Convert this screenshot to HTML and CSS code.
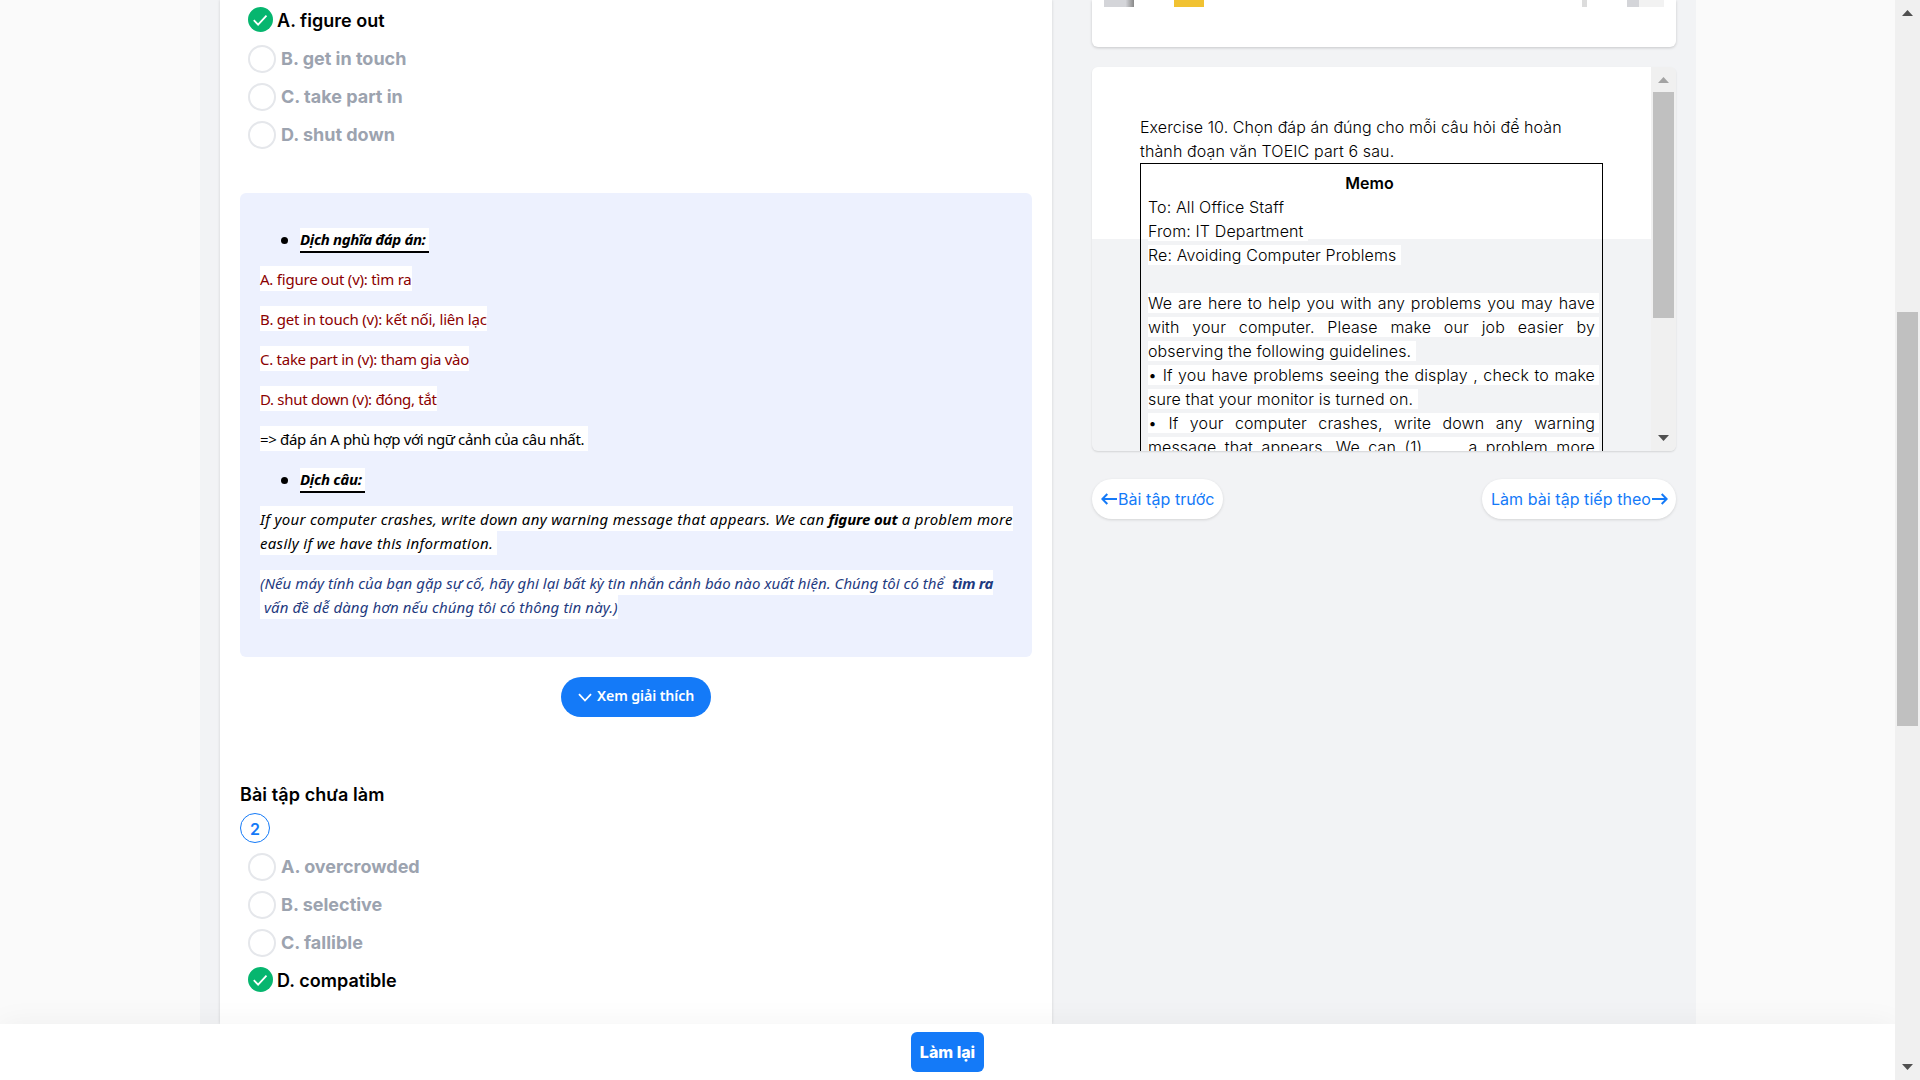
FILE: index.html
```html
<!DOCTYPE html>
<html lang="vi">
<head>
<meta charset="utf-8">
<title>Bài tập TOEIC part 6</title>
<link rel="stylesheet" href="styles.css">
</head>
<body>
<div class="viewport">
  <div class="page">
    <main class="container">
      <section class="questions">
        <ul class="options">
          <li class="option option-correct">
            <svg class="check" viewBox="0 0 25 25"><circle cx="12.5" cy="12.5" r="12.5"/><path d="M5.8 13.2l4.3 4.4 8.4-9"/></svg>
            <span>A. figure out</span>
          </li>
          <li class="option"><i class="radio"></i><span>B. get in touch</span></li>
          <li class="option"><i class="radio"></i><span>C. take part in</span></li>
          <li class="option"><i class="radio"></i><span>D. shut down</span></li>
        </ul>

        <div class="explain">
          <h4 class="topic"><span class="topic-text">Dịch nghĩa đáp án:&nbsp;</span></h4>
          <p class="answer"><span class="mark">A. figure out (v): tìm ra</span></p>
          <p class="answer"><span class="mark">B. get in touch (v): kết nối, liên lạc</span></p>
          <p class="answer answer-third"><span class="mark">C. take part in (v): tham gia vào</span></p>
          <p class="answer answer-last"><span class="mark">D. shut down (v): đóng, tắt</span></p>
          <p class="conclusion"><span class="mark">=&gt; đáp án A phù hợp với ngữ cảnh của câu nhất.&nbsp;</span></p>
          <h4 class="topic topic-short"><span class="topic-text">Dịch câu:&nbsp;</span></h4>
          <p class="english"><span class="mark">If your computer crashes, write down any warning message that appears. We can <b>figure out</b> a problem more<br>easily if we have this information.&nbsp;</span></p>
          <p class="vietnamese"><span class="mark">(Nếu máy tính của bạn gặp sự cố, hãy ghi lại bất kỳ tin nhắn cảnh báo nào xuất hiện. Chúng tôi có thể &nbsp;<b>tìm ra</b><br>&nbsp;<span class="second">vấn đề dễ dàng hơn nếu chúng tôi có thông tin này.)</span></span></p>
        </div>

        <button class="toggle">
          <svg class="chevron" viewBox="0 0 14 9"><path d="M1 1.2l6 6.3 6-6.3"/></svg>
          <span>Xem giải thích</span>
        </button>

        <h3 class="heading">Bài tập chưa làm</h3>
        <div class="number">2</div>
        <ul class="options">
          <li class="option"><i class="radio"></i><span>A. overcrowded</span></li>
          <li class="option"><i class="radio"></i><span>B. selective</span></li>
          <li class="option"><i class="radio"></i><span>C. fallible</span></li>
          <li class="option option-correct">
            <svg class="check" viewBox="0 0 25 25"><circle cx="12.5" cy="12.5" r="12.5"/><path d="M5.8 13.2l4.3 4.4 8.4-9"/></svg>
            <span>D. compatible</span>
          </li>
        </ul>
      </section>

      <aside class="side">
        <div class="banner">
          <i class="chip chip-gray"></i><i class="chip chip-yellow"></i><i class="chip chip-line"></i><i class="chip chip-pale"></i>
        </div>

        <div class="reading">
          <div class="reading-body">
            <div class="passage">
              <div class="line lead">Exercise 10. Chọn đáp án đúng cho mỗi câu hỏi để hoàn</div>
              <div class="line">thành đoạn văn TOEIC part 6 sau.</div>
              <div class="memo">
                <div class="line memo-title">Memo&nbsp;</div>
                <div class="line"><span class="paper">To: All Office Staff&nbsp;</span></div>
                <div class="line"><span class="paper">From: IT Department&nbsp;</span></div>
                <div class="line"><span class="paper">Re: Avoiding Computer Problems&nbsp;</span></div>
                <div class="line"></div>
                <div class="line"><span class="paper full">We are here to help you with any problems you may have</span></div>
                <div class="line"><span class="paper full">with your computer. Please make our job easier by</span></div>
                <div class="line"><span class="paper">observing the following guidelines.&nbsp;</span></div>
                <div class="line"><span class="paper full">• If you have problems seeing the display , check to make</span></div>
                <div class="line"><span class="paper">sure that your monitor is turned on.&nbsp;</span></div>
                <div class="line"><span class="paper full">• If your computer crashes, write down any warning</span></div>
                <div class="line"><span class="paper full">message that appears. We can (1) ____ a problem more</span></div>
              </div>
            </div>
          </div>
          <div class="bar bar-inner">
            <svg class="arrow" viewBox="0 0 11 6"><path fill="#a3a3a3" d="M5.5 0L11 6H0z"/></svg>
            <i class="thumb"></i>
            <svg class="arrow arrow-end" viewBox="0 0 11 6"><path fill="#505050" d="M0 0h11L5.5 6z"/></svg>
          </div>
        </div>

        <nav class="pager">
          <a class="pill"><svg class="go" viewBox="0 0 16 12"><path d="M16 6H1.5M6.3 1L1.3 6l5 5"/></svg><span>Bài tập trước</span></a>
          <a class="pill"><span>Làm bài tập tiếp theo</span><svg class="go" viewBox="0 0 16 12"><path d="M0 6h14.5M9.7 1l5 5-5 5"/></svg></a>
        </nav>
      </aside>
    </main>
    <footer class="footer"><button class="redo">Làm lại</button></footer>
  </div>
  <div class="bar bar-page">
    <svg class="arrow" viewBox="0 0 11 6"><path fill="#505050" d="M5.5 0L11 6H0z"/></svg>
    <i class="thumb"></i>
    <svg class="arrow arrow-end" viewBox="0 0 11 6"><path fill="#505050" d="M0 0h11L5.5 6z"/></svg>
  </div>
</div>
</body>
</html>
```
FILE: styles.css
```css
* { box-sizing: border-box; }
body { margin: 0; background: #fafafa; font-family: Inter, sans-serif; color: #000; }
h3, h4, p, ul { margin: 0; padding: 0; }
button { border: 0; padding: 0; font-family: inherit; color: #fff; background: #147af8; }
svg { display: block; flex: none; }

.viewport { display: flex; width: 1920px; height: 1080px; overflow: hidden; }
.page { display: flex; flex-direction: column; width: 1895px; height: 1080px; }
.container { display: flex; gap: 40px; width: 1496px; height: 1024px; margin: 0 auto 0 200px; padding: 0 20px; background: #f2f3f5; }

/* left column */
.questions { width: 832px; height: 1024px; padding: 7px 20px 0; background: #fff; box-shadow: 0 0 3px rgba(0, 0, 0, .14); }
.options { display: flex; flex-direction: column; gap: 10px; padding-left: 8px; list-style: none; }
.option { display: flex; gap: 5px; height: 28px; font-size: 18px; font-weight: 650; line-height: 27px; color: #9ca3af; }
.option-correct { gap: 4px; font-weight: 600; letter-spacing: .03px; color: #000; }
.option-correct span { line-height: 28px; }
.radio { width: 28px; height: 28px; border: 2px solid #e5e7eb; border-radius: 50%; }
.check { width: 25px; height: 25px; }
.check circle { fill: #06b66f; }
.check path { fill: none; stroke: #fff; stroke-width: 1.8; }

.explain { width: 792px; height: 464px; margin-top: 44px; padding: 35px 20px; border-radius: 6px; background: #edf1fe; font-family: "Noto Sans", sans-serif; font-size: 15px; line-height: 24px; white-space: nowrap; }
.explain p { margin: 16px 0; position: relative; top: -1px; }
.mark { padding: 3px 0 2px; background: #fff; }
.topic { display: flex; align-items: center; height: 24px; font-size: 15px; font-style: italic; letter-spacing: -.36px; }
.topic::before { content: ""; width: 7px; height: 7px; margin: 0 12px 0 21px; border-radius: 50%; background: #000; }
.topic-text { height: 25px; line-height: 23px; background: #fff; border-bottom: 2px solid #000; }
.topic-short { letter-spacing: -.3px; }
.answer { color: #8b0000; letter-spacing: -.22px; }
.answer-third { letter-spacing: -.27px; }
.answer-last { letter-spacing: -.3px; }
.conclusion { letter-spacing: -.33px; }
.english { font-style: italic; letter-spacing: .3px; }
.english b { letter-spacing: -.15px; }
.vietnamese { font-style: italic; color: #1f3b7f; letter-spacing: .04px; }
.vietnamese b { letter-spacing: -.35px; }
.second { letter-spacing: .12px; }

.toggle { display: flex; align-items: center; gap: 5px; width: 150px; height: 40px; margin: 20px auto 0; padding-left: 17px; border-radius: 20px; font: 600 14.2px/36px "Noto Sans", sans-serif; letter-spacing: -.1px; white-space: nowrap; }
.toggle span { height: 38px; }
.chevron { width: 14px; height: 9px; }
.chevron path { fill: none; stroke: #fff; stroke-width: 1.8; }

.heading { margin-top: 64px; height: 27px; font-size: 18px; font-weight: 600; line-height: 27px; letter-spacing: .08px; }
.number { width: 30px; height: 30px; margin: 5px 0 10px; border: 1px solid #147af8; border-radius: 50%; font-size: 16px; font-weight: 600; line-height: 30px; text-align: center; color: #147af8; }

/* right column */
.side { width: 584px; }
.banner { display: flex; height: 47px; padding-left: 12px; border-radius: 0 0 6px 6px; background: #fff; box-shadow: 0 1px 3px rgba(0, 0, 0, .18); }
.chip { height: 7px; }
.chip-gray { width: 30px; background: linear-gradient(90deg, #d4d5d9 72%, #888 100%); }
.chip-yellow { width: 30px; margin-left: 40px; background: #f1c232; }
.chip-line { width: 5px; margin-left: 378px; background: #dcdcdc; }
.chip-pale { width: 37px; margin-left: 40px; background: linear-gradient(90deg, #d4d5d9 12px, #f2f2f2 12px); }

.reading { display: flex; height: 384px; margin-top: 20px; border-radius: 6px; overflow: hidden; box-shadow: 0 1px 2px rgba(0, 0, 0, .13); background: #f2f3f5; }
.reading-body { width: 559px; height: 172px; background: #fff; }
.passage { padding: 48px 48px 0; font-size: 16px; font-weight: 300; letter-spacing: .12px; white-space: nowrap; }
.lead { letter-spacing: .07px; }
.line { height: 24px; line-height: 24px; }
.memo { width: 463px; height: 400px; padding: 7px; border: 1px solid #000; }
.memo-title { font-weight: 600; text-align: center; letter-spacing: 0; }
.paper { display: inline-block; height: 20px; line-height: 20px; margin: 2px 0; vertical-align: top; background: #fff; }
.full { width: 451px; padding-right: 4px; text-align: justify; text-align-last: justify; white-space: normal; }

.pager { display: flex; justify-content: space-between; margin-top: 28px; }
.pill { display: flex; align-items: center; gap: 1px; height: 40px; padding: 0 8px 0 9px; border-radius: 20px; background: #fff; box-shadow: 0 1px 3px rgba(0, 0, 0, .13); font-size: 16px; letter-spacing: .06px; color: #147af8; }
.go { width: 16px; height: 12px; }
.go path { fill: none; stroke: #147af8; stroke-width: 2; }

/* scrollbars */
.bar { display: flex; flex-direction: column; align-items: center; width: 25px; background: #f0f0f0; padding: 10px 0; }
.arrow { width: 11px; height: 6px; }
.arrow-end { margin-top: auto; }
.thumb { width: 21px; background: #c0c0c0; }
.bar-inner .thumb { height: 226px; margin-top: 9px; }
.bar-page { height: 1080px; position: relative; }
.bar-page .thumb { height: 414px; margin-top: 296px; }

/* bottom bar */
.footer { position: relative; display: flex; justify-content: center; height: 56px; padding-top: 8px; background: #fff; box-shadow: 0 0 30px rgba(0, 0, 0, .05); }
.redo { width: 73px; height: 40px; border-radius: 6px; font-size: 16px; font-weight: 800; line-height: 40px; }
```
